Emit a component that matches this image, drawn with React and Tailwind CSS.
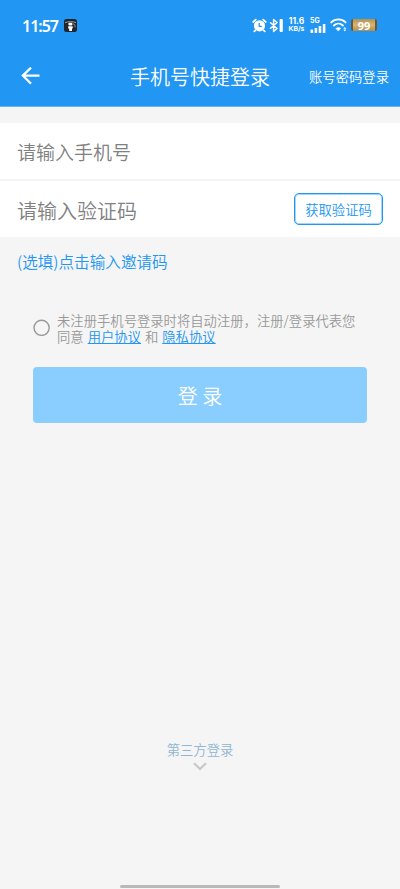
import { useState } from 'react'

function AlarmIcon() {
  return (
    <svg width="15" height="15" viewBox="0 0 15 15" fill="none">
      <circle cx="7.5" cy="7.8" r="5.6" fill="#fff" />
      <path d="M1.2 4 3.8 1.6M13.8 4 11.2 1.6M3.3 12.4l-1 1M11.7 12.4l1 1" stroke="#fff" strokeWidth="1.8" strokeLinecap="round" />
      <path d="M7.2 5v3.3h2.6" stroke="#2196f3" strokeWidth="1.2" />
    </svg>
  )
}

function BluetoothIcon() {
  return (
    <svg width="15" height="15" viewBox="0 0 15 15" fill="none">
      <path d="m1 4.3 7 6.2-3.4 3V1.5l3.4 3-7 6.2" stroke="#fff" strokeWidth="1.5" strokeLinejoin="round" />
      <rect x="10.6" y="1" width="3.2" height="13" rx="1" fill="#fff" />
    </svg>
  )
}

function SignalIcon() {
  return (
    <svg width="16" height="9" viewBox="0 0 16 9" fill="#fff">
      <rect x="0.5" y="5.5" width="2.6" height="3.5" rx="0.6" />
      <rect x="4.6" y="4" width="2.6" height="5" rx="0.6" />
      <rect x="8.7" y="2" width="2.6" height="7" rx="0.6" />
      <rect x="12.8" y="0" width="2.6" height="9" rx="0.6" />
    </svg>
  )
}

function WifiIcon() {
  return (
    <svg width="17" height="14" viewBox="0 0 17 14" fill="none" stroke="#fff" strokeWidth="1.9" strokeLinecap="round">
      <path d="M1.2 4.4c4-4 10.4-4 14.4 0M3.9 7.5c2.6-2.5 6.4-2.5 9 0" />
      <path d="M6.1 10.4c1.4-1.2 3.2-1.2 4.6 0l-2.3 2.4z" fill="#fff" strokeWidth="0.6" />
      <path d="m14.8 8.9 1.5 1.9h-3zm0 4.5-1.5-1.9h3z" fill="#fff" stroke="none" />
    </svg>
  )
}

function AppBadge() {
  return (
    <svg width="13" height="13" viewBox="0 0 13 13" fill="none">
      <rect width="13" height="13" rx="2.5" fill="#20262c" />
      <path d="M1 3.6c3-1.2 8-1.2 11 0" stroke="#aab4bb" strokeWidth="0.9" />
      <rect x="4.4" y="3.8" width="4" height="2.8" rx="1" fill="#fff" />
      <path d="M4.2 7.2h4.5v2.4H8V12H5.2V9.6h-1z" fill="#fff" />
      <path d="M9 4.7c1.8.6 2.2 1.8 2 3.6" stroke="#8c969d" />
    </svg>
  )
}

function StatusBar() {
  return (
    <div className="flex h-[50px] items-center pr-[23px] pl-[22px] text-white">
      <span className="w-[36px] pt-px text-[16px] leading-none font-semibold tracking-[-1px] whitespace-nowrap font-['Noto_Sans',sans-serif]">11:57</span>
      <span className="ml-[6px]"><AppBadge /></span>
      <div className="ml-auto flex items-center">
        <AlarmIcon />
        <span className="ml-[2px]"><BluetoothIcon /></span>
        <div className="ml-[4px] flex w-[17px] flex-col items-center font-bold whitespace-nowrap font-['Inter',sans-serif]">
          <span className="text-[8.5px] leading-[8px]">11.6</span>
          <span className="text-[6.8px] leading-[8px]">KB/s</span>
        </div>
        <div className="ml-[5px] flex w-[17px] flex-col font-['Inter',sans-serif]">
          <span className="text-[7px] leading-[7px] font-bold">5G</span>
          <SignalIcon />
        </div>
        <span className="ml-[3px]"><WifiIcon /></span>
        <div className="ml-[4px] flex h-[12px] w-[26px] items-center justify-center rounded-[2px] border-x-2 border-[#6b573b] bg-linear-to-b from-[#b69250] via-[#d8b571] to-[#b08d4d] text-[11px] leading-none font-bold font-['Noto_Sans',sans-serif]">99</div>
      </div>
    </div>
  )
}

function Header() {
  return (
    <header className="h-[107px] border-b border-[#64b5f6] bg-[#2196f3] text-white">
      <StatusBar />
      <div className="grid h-[52px] grid-cols-[130px_140px_1fr] items-center">
        <button className="pl-[21px]" aria-label="返回">
          <svg width="19" height="18" viewBox="0 0 19 18" fill="none" stroke="#fff" strokeWidth="2.2">
            <path d="M18.5 8.6H2M10 .6 1.8 8.6l8.2 8" />
          </svg>
        </button>
        <h1 className="pt-px text-[20px] leading-none whitespace-nowrap">手机号快捷登录</h1>
        <button className="pt-px pr-[11px] text-right text-[13.33px] leading-none whitespace-nowrap">账号密码登录</button>
      </div>
    </header>
  )
}

export default function App() {
  const [agreed, setAgreed] = useState(false)

  return (
    <div className="flex h-[889px] w-full flex-col overflow-hidden bg-[#f5f5f5] font-['Noto_Sans_CJK_SC',sans-serif] font-[350]">
      <Header />

      <div className="mt-4 bg-white">
        <div className="flex h-[58px] items-center border-b-2 border-[#f4f4f4] px-[17px]">
          <input className="w-full text-[19px] leading-none outline-none placeholder:text-[#808080]" placeholder="请输入手机号" />
        </div>
        <div className="flex h-14 items-center px-[17px]">
          <input className="min-w-0 flex-1 pt-[3px] text-[20px] outline-none placeholder:text-[#808080]" placeholder="请输入验证码" />
          <button className="h-8 w-[89px] rounded-[5px] border border-[#2196f3] pt-px text-[13.33px] leading-none whitespace-nowrap text-[#2196f3] inset-ring inset-ring-[#2196f3]/40">
            获取验证码
          </button>
        </div>
      </div>

      <button className="mt-3 ml-[17px] self-start text-[15.6px] leading-6 whitespace-nowrap text-[#2196f3]">(选填)点击输入邀请码</button>

      <div className="mt-[40px] flex items-start pl-[33px]">
        <button className="mt-[6px] shrink-0" onClick={() => setAgreed(!agreed)} aria-label="同意">
          <svg width="17" height="17" viewBox="0 0 17 17" fill={agreed ? '#2196f3' : 'none'}>
            <circle cx="8.6" cy="8.8" r="7.6" stroke="#999" strokeWidth="1.4" />
          </svg>
        </button>
        <div className="ml-[7px] text-[13.33px] leading-[16px] whitespace-nowrap text-[#999]">
          <p>未注册手机号登录时将自动注册，注册/登录代表您</p>
          <p className="flex gap-x-[4px]">
            <span>同意</span>
            <a className="text-[#2196f3] underline">用户协议</a>
            <span>和</span>
            <a className="text-[#2196f3] underline">隐私协议</a>
          </p>
        </div>
      </div>

      <button className="mx-[33px] mt-[22px] h-14 rounded-[4px] bg-[#8acdff] pt-px text-[20px] text-white">登 录</button>

      <div className="mt-auto flex flex-col items-center">
        <span className="text-[13.33px] leading-5 text-[#90b6d1]">第三方登录</span>
        <svg className="mt-[2px]" width="14" height="9" viewBox="0 0 14 9" fill="none" stroke="#c8c8c8" strokeWidth="2.2">
          <path d="M1 1.2 7 7l6-5.8" />
        </svg>
      </div>
      <div className="mx-auto mt-[114px] mb-px h-[3px] w-40 shrink-0 rounded-full bg-[#b9b9b9]" />
    </div>
  )
}
